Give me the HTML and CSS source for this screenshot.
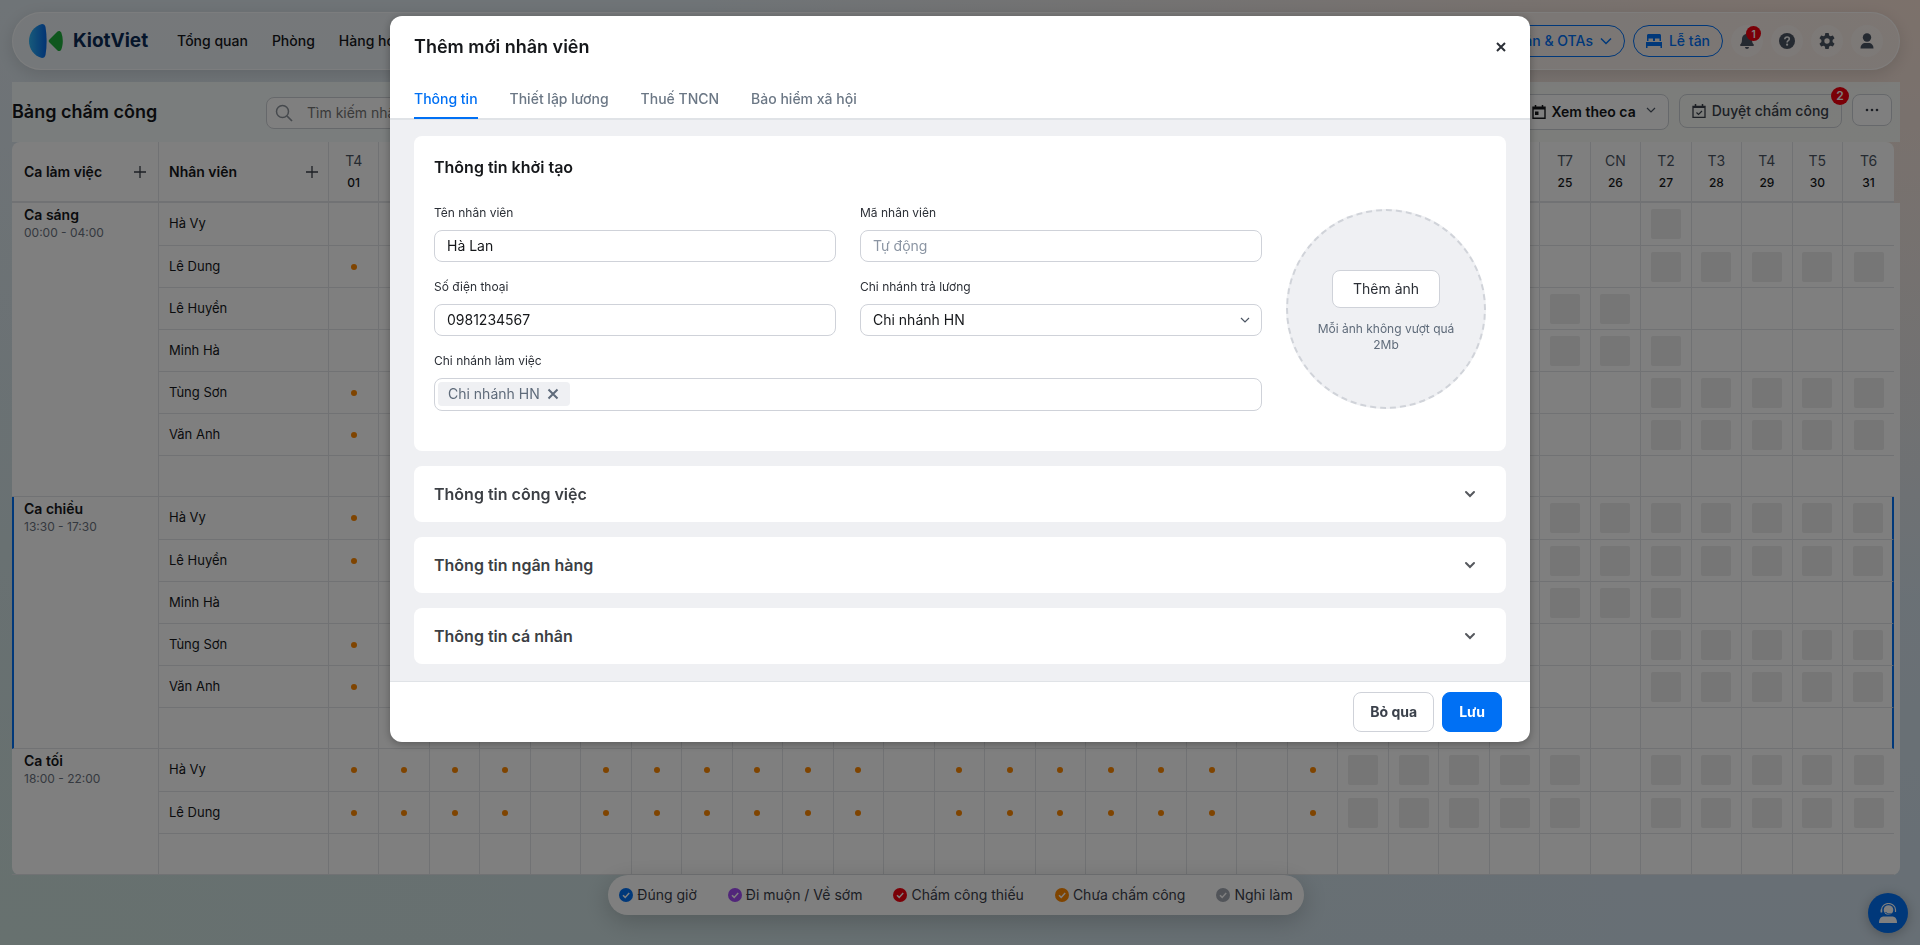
FILE: index.html
```html
<!DOCTYPE html>
<html lang="vi">
  <head>
    <meta charset="utf-8">
    <title>Bảng chấm công</title>
    <link rel="stylesheet" href="styles.css">
  </head>
  <body>
    <div class="page">
      <header class="topbar">
        <a class="brand" href="#">
          <svg class="brand-mark" width="34" height="34" viewBox="0 0 34 34">
            <defs>
              <linearGradient id="brandBlue" x1="0" x2="1">
                <stop offset="0" stop-color="#2fb4f5" />
                <stop offset="1" stop-color="#0567e8" />
              </linearGradient>
            </defs>
            <path d="M13 0C5 2 0 9 0 17s5 15 13 17c2 0 3-1 3.500-3 1.500-9 1.500-19 0-28C16 1 15 0 13 0z" fill="url(#brandBlue)" />
            <path d="M20.500 15.500l8-8c1-1 3-.8 3.800 1 2 5.500 2 11.500 0 17-.8 1.800-2.800 2-3.800 1l-8-8c-1.100-1-1.100-2 0-3z" fill="#1fae3c" />
          </svg>
          <span class="brand-name">KiotViet</span>
        </a>
        <nav class="nav">
          <a href="#">Tổng quan</a>
          <a href="#">Phòng</a>
          <a href="#">Hàng hóa</a>
        </nav>
        <div class="topbar-actions">
          <button class="pill">
            Kênh bán &amp; OTAs
            <svg width="12" height="12" viewBox="0 0 12 12"><path d="M1 3.500L6 8.500l5-5" fill="none" stroke="currentColor" stroke-width="1.500" /></svg>
          </button>
          <button class="pill">
            <svg width="16" height="16" viewBox="0 0 16 16"><path d="M1 8V2.500C1 1.700 1.600 1 2.500 1h11c.9 0 1.500.7 1.500 1.500V8H13.500V5.500H9V8H7V5.500H2.500V8zM0 9h16v6h-1.500v-2h-13v2H0z" fill="currentColor" /></svg>
            Lễ tân
          </button>
          <button class="round" aria-label="Thông báo">
            <svg width="16" height="16" viewBox="0 0 16 16"><path d="M8 0c.7 0 1.200.5 1.200 1.100C11.500 1.700 13 3.600 13 6c0 3.500.8 4.500 1.700 5.500.6.700.1 1.500-.7 1.500H2c-.8 0-1.300-.8-.7-1.500C2.200 10.500 3 9.500 3 6c0-2.400 1.500-4.300 3.800-4.900C6.800.5 7.300 0 8 0zM6 14h4c0 1.100-.9 2-2 2s-2-.9-2-2z" fill="currentColor" /></svg>
            <span class="badge badge-sm">1</span>
          </button>
          <button class="round" aria-label="Trợ giúp">
            <svg width="16" height="16" viewBox="0 0 16 16"><circle cx="8" cy="8" r="8" fill="currentColor" /><path d="M5.800 6.200c0-1.300 1-2.200 2.300-2.200s2.200.8 2.200 2c0 1.700-2.200 1.700-2.200 3.400" fill="none" stroke="#f4f4f4" stroke-width="1.600" /><circle cx="8.100" cy="11.700" r="1.100" fill="#f4f4f4" /></svg>
          </button>
          <button class="round" aria-label="Thiết lập">
            <svg width="16" height="16" viewBox="0 0 24 24"><path d="M9.500 0h5l.7 3.700 2 1.200 3.600-1.300 2.500 4.400-2.900 2.400v3.200l2.900 2.400-2.500 4.400-3.600-1.300-2 1.200-.7 3.700h-5l-.7-3.700-2-1.200-3.600 1.300L.7 16l2.900-2.400v-3.200L.7 8l2.500-4.400 3.600 1.300 2-1.200zM12 8a4 4 0 100 8 4 4 0 000-8z" fill="currentColor" fill-rule="evenodd" /></svg>
          </button>
          <button class="round" aria-label="Tài khoản">
            <svg width="16" height="16" viewBox="0 0 16 16"><circle cx="8" cy="4.500" r="4.200" fill="currentColor" /><path d="M1.500 15.500c0-3.600 2.200-5.500 5-5.500h3c2.800 0 5 1.900 5 5.500z" fill="currentColor" /></svg>
          </button>
        </div>
      </header>

      <div class="toolbar">
        <h1 class="page-title">Bảng chấm công</h1>
        <label class="search">
          <svg width="18" height="18" viewBox="0 0 18 18"><circle cx="7.500" cy="7.500" r="6" fill="none" stroke="currentColor" stroke-width="1.500" /><path d="M12 12l5 5" stroke="currentColor" stroke-width="1.700" /></svg>
          <input type="text" placeholder="Tìm kiếm nhân viên" aria-label="Tìm kiếm nhân viên">
        </label>
        <div class="toolbar-actions">
          <button class="tool tool-view">
            <svg width="14" height="14" viewBox="0 0 14 14"><path d="M3.500 0v3M10.500 0v3" stroke="currentColor" stroke-width="1.500" /><path d="M1 2.300h12v11H1z" fill="none" stroke="currentColor" stroke-width="1.400" /><path d="M1 2h12v2.500H1zM3 6.500h3.500V10H3z" fill="currentColor" /></svg>
            Xem theo ca
            <svg class="caret" width="10" height="10" viewBox="0 0 10 10"><path d="M1 3l4 4 4-4" fill="none" stroke="currentColor" stroke-width="1.200" /></svg>
          </button>
          <button class="tool tool-approve">
            <svg width="14" height="14" viewBox="0 0 14 14"><path d="M3.500 0v3M10.500 0v3" stroke="currentColor" stroke-width="1.500" /><path d="M1 2.300h12v11H1z" fill="none" stroke="currentColor" stroke-width="1.300" /><path d="M1 2h12v2H1z" fill="currentColor" /><path d="M4.500 8.500l2 2 3.500-3.500" fill="none" stroke="currentColor" stroke-width="1.200" /></svg>
            Duyệt chấm công
            <span class="badge badge-md">2</span>
          </button>
          <button class="tool tool-more" aria-label="Thêm">
            <svg width="14" height="4" viewBox="0 0 14 4"><circle cx="2" cy="2" r="1.300" fill="currentColor" /><circle cx="7" cy="2" r="1.300" fill="currentColor" /><circle cx="12" cy="2" r="1.300" fill="currentColor" /></svg>
          </button>
        </div>
      </div>

      <div class="grid-head">
        <table class="grid">
          <colgroup id="headCols">
            <col class="col-shift">
            <col class="col-staff">
          </colgroup>
          <thead>
            <tr id="headRow">
              <th>
                <div class="head-cell">
                  Ca làm việc
                  <button class="add" aria-label="Thêm ca làm việc"><svg width="12" height="12" viewBox="0 0 12 12"><path d="M6 0v12M0 6h12" stroke="currentColor" stroke-width="1.300" /></svg></button>
                </div>
              </th>
              <th>
                <div class="head-cell head-cell-staff">
                  Nhân viên
                  <button class="add" aria-label="Thêm nhân viên"><svg width="12" height="12" viewBox="0 0 12 12"><path d="M6 0v12M0 6h12" stroke="currentColor" stroke-width="1.300" /></svg></button>
                </div>
              </th>
            </tr>
          </thead>
        </table>
      </div>
      <div class="grid-body">
        <table class="grid" id="gridBody">
          <colgroup id="bodyCols">
            <col class="col-shift">
            <col class="col-staff">
          </colgroup>
        </table>
      </div>

      <ul class="legend">
        <li><svg class="on-time" width="14" height="14" viewBox="0 0 14 14"><circle cx="7" cy="7" r="7" fill="currentColor" /><path d="M4 7.200l2.200 2.200L10.200 5" fill="none" stroke="#fff" stroke-width="1.500" /></svg>Đúng giờ</li>
        <li><svg class="late" width="14" height="14" viewBox="0 0 14 14"><circle cx="7" cy="7" r="7" fill="currentColor" /><path d="M4 7.200l2.200 2.200L10.200 5" fill="none" stroke="#fff" stroke-width="1.500" /></svg>Đi muộn / Về sớm</li>
        <li><svg class="missing" width="14" height="14" viewBox="0 0 14 14"><circle cx="7" cy="7" r="7" fill="currentColor" /><path d="M4 7.200l2.200 2.200L10.200 5" fill="none" stroke="#fff" stroke-width="1.500" /></svg>Chấm công thiếu</li>
        <li><svg class="pending" width="14" height="14" viewBox="0 0 14 14"><circle cx="7" cy="7" r="7" fill="currentColor" /><path d="M4 7.200l2.200 2.200L10.200 5" fill="none" stroke="#fff" stroke-width="1.500" /></svg>Chưa chấm công</li>
        <li><svg class="off" width="14" height="14" viewBox="0 0 14 14"><circle cx="7" cy="7" r="7" fill="currentColor" /><path d="M4 7.200l2.200 2.200L10.200 5" fill="none" stroke="#fff" stroke-width="1.500" /></svg>Nghỉ làm</li>
      </ul>

      <button class="support" aria-label="Hỗ trợ">
        <svg width="20" height="20" viewBox="0 0 20 20"><circle cx="10.500" cy="7" r="4.800" fill="#fff" /><path d="M3.500 9V6.800a7 6.300 0 0114 0V9" fill="none" stroke="#fff" stroke-width="1.200" /><path d="M2.600 6.500h1.600v3H2.600z" fill="#fff" /><path d="M7.500 9c1 1.500 2.500 2 4.500 2 2.500 0 4-.5 5-2" fill="none" stroke="#0070f4" stroke-width="1" /><path d="M1 20c0-4.500 2-6.500 5-6.500h8c3 0 5 2 5 6.500z" fill="#fff" /></svg>
      </button>
    </div>

    <div class="overlay">
      <form class="modal" role="dialog" aria-labelledby="modalTitle">
        <div class="modal-header">
          <div class="modal-title-row">
            <h2 class="modal-title" id="modalTitle">Thêm mới nhân viên</h2>
            <button type="button" class="close" aria-label="Đóng">
              <svg width="10" height="10" viewBox="0 0 10 10"><path d="M1 1l8 8M9 1l-8 8" stroke="currentColor" stroke-width="2" /></svg>
            </button>
          </div>
          <div class="tabs" role="tablist">
            <button type="button" class="tab active" role="tab">Thông tin</button>
            <button type="button" class="tab" role="tab">Thiết lập lương</button>
            <button type="button" class="tab" role="tab">Thuế TNCN</button>
            <button type="button" class="tab" role="tab">Bảo hiểm xã hội</button>
          </div>
        </div>

        <div class="modal-body">
          <section class="card">
            <h3 class="card-title">Thông tin khởi tạo</h3>
            <div class="card-content">
              <div class="fields">
                <div class="field">
                  <label for="name">Tên nhân viên</label>
                  <input class="control" id="name" type="text" value="Hà Lan">
                </div>
                <div class="field">
                  <label for="code">Mã nhân viên</label>
                  <input class="control" id="code" type="text" placeholder="Tự động">
                </div>
                <div class="field">
                  <label for="phone">Số điện thoại</label>
                  <input class="control" id="phone" type="tel" value="0981234567">
                </div>
                <div class="field">
                  <label for="payBranch">Chi nhánh trả lương</label>
                  <div class="select-wrap">
                    <select class="control" id="payBranch">
                      <option>Chi nhánh HN</option>
                    </select>
                    <svg width="10" height="10" viewBox="0 0 10 10"><path d="M1 3l4 4 4-4" fill="none" stroke="currentColor" stroke-width="1.200" /></svg>
                  </div>
                </div>
                <div class="field field-wide">
                  <label for="workBranch">Chi nhánh làm việc</label>
                  <div class="control tag-box">
                    <span class="tag">
                      Chi nhánh HN
                      <button type="button" aria-label="Bỏ chọn Chi nhánh HN"><svg width="12" height="12" viewBox="0 0 12 12"><path d="M1.500 1.500l9 9M10.500 1.500l-9 9" stroke="currentColor" stroke-width="2" /></svg></button>
                    </span>
                    <input id="workBranch" type="text">
                  </div>
                </div>
              </div>
              <div class="avatar">
                <button type="button" class="avatar-btn">Thêm ảnh</button>
                <p class="avatar-hint">Mỗi ảnh không vượt quá 2Mb</p>
              </div>
            </div>
          </section>

          <button type="button" class="card card-collapsed">
            Thông tin công việc
            <svg width="12" height="12" viewBox="0 0 12 12"><path d="M2 4l4 4 4-4" fill="none" stroke="currentColor" stroke-width="2" stroke-linecap="round" /></svg>
          </button>
          <button type="button" class="card card-collapsed">
            Thông tin ngân hàng
            <svg width="12" height="12" viewBox="0 0 12 12"><path d="M2 4l4 4 4-4" fill="none" stroke="currentColor" stroke-width="2" stroke-linecap="round" /></svg>
          </button>
          <button type="button" class="card card-collapsed">
            Thông tin cá nhân
            <svg width="12" height="12" viewBox="0 0 12 12"><path d="M2 4l4 4 4-4" fill="none" stroke="currentColor" stroke-width="2" stroke-linecap="round" /></svg>
          </button>
        </div>

        <div class="modal-footer">
          <button type="button" class="btn">Bỏ qua</button>
          <button type="button" class="btn btn-primary">Lưu</button>
        </div>
      </form>
    </div>

    <script src="script.js"></script>
  </body>
</html>
```

FILE: styles.css
```css
* {
  box-sizing: border-box;
}

body {
  margin: 0;
  font-family: Inter, 'Liberation Sans', sans-serif;
  font-size: 14px;
  line-height: 20px;
  color: #15171a;
  overflow: hidden;
}

button,
input,
select {
  font: inherit;
  color: inherit;
}

button {
  cursor: pointer;
}

a {
  color: inherit;
  text-decoration: none;
}

svg {
  flex-shrink: 0;
}

h1,
h2,
h3,
p {
  margin: 0;
}

.page {
  display: flex;
  flex-direction: column;
  min-height: 100vh;
  padding: 12px 20px 0 12px;
  background:
    radial-gradient(ellipse at 100% 0, #f8e2d6 0%, rgba(248, 226, 214, 0) 45%),
    radial-gradient(ellipse at 0 100%, #cfe2de 0%, rgba(207, 226, 222, 0) 60%),
    linear-gradient(180deg, #dfe8ee, #cfdeea);
}

/* top bar */
.topbar {
  display: flex;
  align-items: center;
  height: 58px;
  padding: 0 16px;
  border: 1px solid rgba(255, 255, 255, 0.7);
  border-radius: 29px;
  background: rgba(255, 255, 255, 0.4);
  box-shadow: 0 4px 16px rgba(0, 0, 0, 0.12);
}

.brand {
  display: flex;
  align-items: center;
  gap: 10px;
}

.brand-name {
  font-size: 19px;
  font-weight: 700;
  color: #0a2a55;
}

.nav {
  display: flex;
  gap: 24px;
  margin-left: 29px;
  font-weight: 500;
}

.topbar-actions {
  display: flex;
  align-items: center;
  gap: 8px;
  margin-left: auto;
}

.pill {
  display: flex;
  align-items: center;
  gap: 7px;
  height: 32px;
  padding: 0 12px;
  border: 1px solid #0070f4;
  border-radius: 16px;
  background: none;
  color: #0070f4;
  font-weight: 500;
}

.round {
  position: relative;
  display: flex;
  align-items: center;
  justify-content: center;
  width: 32px;
  height: 32px;
  padding: 0;
  border: 0;
  border-radius: 50%;
  background: rgba(255, 255, 255, 0.35);
  color: #4b5563;
}

.badge {
  position: absolute;
  display: flex;
  align-items: center;
  justify-content: center;
  border-radius: 50%;
  background: #f5000f;
  color: #fff;
  font-weight: 600;
}

.badge-sm {
  top: 1px;
  right: 2px;
  width: 15px;
  height: 15px;
  font-size: 10px;
}

.badge-md {
  top: -8px;
  right: -8px;
  width: 18px;
  height: 18px;
  font-size: 12px;
}

/* toolbar */
.toolbar {
  display: flex;
  align-items: flex-start;
  height: 60px;
  margin-top: 12px;
  padding: 12px 8px 0 0;
  background: rgba(250, 255, 252, 0.8);
}

.page-title {
  width: 254px;
  font-size: 18px;
  line-height: 36px;
  font-weight: 600;
}

.search {
  display: flex;
  align-items: center;
  gap: 12px;
  width: 400px;
  height: 32px;
  margin-top: 3px;
  padding: 0 8px;
  border: 1px solid #cdd1d6;
  border-radius: 8px;
  background: #fff;
  color: #8c939b;
}

.search input {
  flex: 1;
  border: 0;
  outline: 0;
  background: none;
}

.toolbar-actions {
  display: flex;
  align-items: flex-start;
  gap: 10px;
  margin-left: auto;
}

.tool {
  position: relative;
  display: flex;
  align-items: center;
  gap: 6px;
  height: 34px;
  padding: 0 12px;
  border: 1px solid #cdd1d6;
  border-radius: 8px;
  background: none;
  font-weight: 500;
}

.tool-view {
  gap: 5px;
  height: 36px;
  background: #fff;
  font-weight: 600;
}

.caret {
  margin: 0 0 4px 5px;
  color: #4b5563;
}

.tool-approve {
  color: #3a404a;
}

.tool-more {
  justify-content: center;
  width: 40px;
  height: 32px;
  padding: 0;
  background: #fff;
  color: #3a404a;
}

/* timesheet grid */
.grid-head {
  padding-right: 6px;
}

.grid-body {
  padding-right: 6px;
  border-radius: 0 0 8px 8px;
  background: #fff;
}

.grid {
  width: 100%;
  table-layout: fixed;
  border-collapse: separate;
  border-spacing: 0;
}

.grid-head .grid {
  border-radius: 8px 8px 0 0;
  background: #fff;
}

.col-shift {
  width: 147px;
}

.col-staff {
  width: 170px;
}

.grid th {
  height: 61px;
  padding: 0;
  border-right: 1px solid #e3e5e8;
  border-bottom: 2px solid #e3e5e8;
  font-weight: 600;
  text-align: center;
}

.grid th:last-child,
.grid td:last-child {
  border-right: 0;
}

.head-cell {
  display: flex;
  align-items: center;
  justify-content: space-between;
  padding: 0 12px;
}

.head-cell-staff {
  padding: 0 10px;
}

.add {
  display: flex;
  padding: 0;
  border: 0;
  background: none;
  color: #3a404a;
}

.weekday {
  display: block;
  line-height: 24px;
  font-weight: 400;
  color: #4b5563;
}

.day {
  display: block;
  padding-bottom: 2px;
  font-size: 12px;
  font-weight: 500;
}

.grid td {
  height: 42px;
  padding: 0;
  border-right: 1px solid #e3e5e8;
  border-bottom: 1px solid #e3e5e8;
  text-align: center;
}

.grid .row-first td {
  height: 43px;
}

.grid .row-last td {
  height: 41px;
}

.grid td.shift {
  padding: 2px 12px;
  text-align: left;
  vertical-align: top;
}

.grid td.staff {
  padding: 0 0 2px 10px;
  font-size: 13px;
  text-align: left;
}

.shift-name {
  display: block;
  font-weight: 600;
}

.shift-time {
  display: block;
  font-size: 12px;
  line-height: 16px;
  color: #6b7280;
}

.current td.shift {
  padding-left: 10px;
  border-left: 2px solid #0070f4;
}

.current td:last-child {
  border-right: 2px solid #0070f4;
}

.dot {
  display: block;
  width: 6px;
  height: 6px;
  margin: 0 auto;
  border-radius: 50%;
  background: #ff8800;
}

.slot {
  display: block;
  width: 30px;
  height: 30px;
  margin: 0 auto;
  border-radius: 2px;
  background: #ededed;
}

/* legend */
.legend {
  display: flex;
  align-items: center;
  align-self: center;
  gap: 31px;
  height: 40px;
  margin: 0;
  padding: 0 11px;
  border-radius: 20px;
  background: #fff;
  box-shadow: 0 6px 24px rgba(0, 0, 0, 0.2);
  color: #3a404a;
  list-style: none;
}

.legend li {
  display: flex;
  align-items: center;
  gap: 4px;
}

.on-time {
  color: #0070f4;
}

.late {
  color: #a34cf5;
}

.missing {
  color: #f5000f;
}

.pending {
  color: #ff8800;
}

.off {
  color: #a3a9b3;
}

.support {
  position: fixed;
  right: 12px;
  bottom: 12px;
  display: flex;
  align-items: center;
  justify-content: center;
  width: 40px;
  height: 40px;
  padding: 0;
  border: 0;
  border-radius: 50%;
  background: #0070f4;
  box-shadow: 0 2px 12px rgba(0, 0, 0, 0.25);
}

/* modal */
.overlay {
  position: fixed;
  inset: 0;
  display: flex;
  align-items: flex-start;
  justify-content: center;
  padding: 16px;
  background: rgba(0, 0, 0, 0.5);
}

.modal {
  width: 100%;
  max-width: 1140px;
  border-radius: 12px;
  background: #fff;
  box-shadow: 0 2px 8px rgba(0, 0, 0, 0.3);
  overflow: hidden;
}

.modal-header {
  padding: 19px 24px 0;
  border-bottom: 2px solid #e0e3e7;
}

.modal-title-row {
  display: flex;
  align-items: center;
  justify-content: space-between;
}

.modal-title {
  font-size: 18px;
  line-height: 24px;
  font-weight: 600;
}

.close {
  display: flex;
  padding: 0;
  border: 0;
  background: none;
  color: #2b2f36;
}

.tabs {
  display: flex;
  gap: 32px;
  margin-top: 30px;
}

.tab {
  margin-bottom: -1px;
  padding: 0 0 8px;
  border: 0;
  border-bottom: 2px solid transparent;
  background: none;
  color: #6b7785;
  font-weight: 500;
}

.tab.active {
  border-color: #0070f4;
  color: #0070f4;
}

.modal-body {
  display: flex;
  flex-direction: column;
  gap: 15px;
  padding: 16px 24px 17px;
  background: #eff0f3;
}

.card {
  padding: 20px 20px 40px;
  border-radius: 8px;
  background: #fff;
}

.card-title {
  margin-bottom: 26px;
  font-size: 16px;
  line-height: 22px;
  font-weight: 600;
}

.card-content {
  display: flex;
  align-items: flex-start;
  gap: 24px;
}

.fields {
  flex: 1;
  display: grid;
  grid-template-columns: 1fr 1fr;
  gap: 16px 24px;
}

.field label {
  display: block;
  margin-bottom: 8px;
  font-size: 12px;
  line-height: 18px;
  color: #2b2f36;
}

.field-wide {
  grid-column: 1 / -1;
}

.control {
  display: block;
  width: 100%;
  height: 32px;
  padding: 0 12px;
  border: 1px solid #cfd2d9;
  border-radius: 8px;
  background: #fff;
  outline: 0;
}

input.control {
  padding-bottom: 2px;
}

.control::placeholder {
  color: #8b95a3;
}

.select-wrap {
  position: relative;
}

.select-wrap select {
  appearance: none;
}

.select-wrap svg {
  position: absolute;
  top: 11px;
  right: 12px;
  color: #4b5563;
  pointer-events: none;
}

.tag-box {
  display: flex;
  align-items: flex-start;
  height: 33px;
  padding: 3px;
}

.tag-box input {
  flex: 1;
  border: 0;
  outline: 0;
}

.tag {
  display: flex;
  align-items: center;
  gap: 7px;
  height: 24px;
  padding: 0 11px 0 10px;
  border-radius: 4px;
  background: #eff0f3;
  color: #5f6b7a;
}

.tag button {
  display: flex;
  padding: 0;
  border: 0;
  background: none;
}

.avatar {
  display: flex;
  flex-direction: column;
  align-items: center;
  width: 200px;
  height: 200px;
  margin-top: 5px;
  padding: 59px 28px 0;
  border: 2px dashed #d0d3d9;
  border-radius: 50%;
  background: #eff0f3;
}

.avatar-btn {
  height: 38px;
  padding: 0 20px;
  border: 1px solid #cfd2d9;
  border-radius: 8px;
  background: #fff;
  color: #2b2f36;
}

.avatar-hint {
  margin-top: 13px;
  font-size: 12px;
  line-height: 16px;
  color: #5f6b7a;
  text-align: center;
}

.card-collapsed {
  display: flex;
  align-items: center;
  justify-content: space-between;
  height: 56px;
  padding: 0 30px 0 20px;
  border: 0;
  color: #3c3f44;
  font-size: 16px;
  font-weight: 600;
}

.card-collapsed svg {
  color: #55585d;
}

.modal-footer {
  display: flex;
  justify-content: flex-end;
  gap: 8px;
  padding: 10px 28px;
  border-top: 1px solid #e0e3e7;
}

.btn {
  height: 40px;
  padding: 0 16px;
  border: 1px solid #cfd2d9;
  border-radius: 8px;
  background: #fff;
  color: #3a404a;
  font-weight: 700;
}

.btn-primary {
  border-color: #0070f4;
  background: #0070f4;
  color: #fff;
}
```

FILE: script.js
```js
const DAYS = 31;
const WEEKDAYS = ['T4', 'T5', 'T6', 'T7', 'CN', 'T2', 'T3'];

// dots: days not clocked yet, slots: upcoming scheduled days
const WORKED = [1, 2, 3, 4, 6, 7, 8, 9, 10, 11, 13, 14, 15, 16, 17, 18, 20];
const LAST_WEEK = [27, 28, 29, 30, 31];

const shifts = [
  {
    name: 'Ca sáng',
    time: '00:00 - 04:00',
    staff: [
      { name: 'Hà Vy', dots: [], slots: [27] },
      { name: 'Lê Dung', dots: [1], slots: LAST_WEEK },
      { name: 'Lê Huyền', dots: [], slots: [25, 26] },
      { name: 'Minh Hà', dots: [], slots: [25, 26, 27] },
      { name: 'Tùng Sơn', dots: [1], slots: LAST_WEEK },
      { name: 'Văn Anh', dots: [1], slots: LAST_WEEK },
    ],
  },
  {
    name: 'Ca chiều',
    time: '13:30 - 17:30',
    current: true,
    staff: [
      { name: 'Hà Vy', dots: [1], slots: [25, 26, ...LAST_WEEK] },
      { name: 'Lê Huyền', dots: [1], slots: [25, 26, ...LAST_WEEK] },
      { name: 'Minh Hà', dots: [], slots: [25, 26, 27] },
      { name: 'Tùng Sơn', dots: [1], slots: LAST_WEEK },
      { name: 'Văn Anh', dots: [1], slots: LAST_WEEK },
    ],
  },
  {
    name: 'Ca tối',
    time: '18:00 - 22:00',
    staff: [
      { name: 'Hà Vy', dots: WORKED, slots: [21, 22, 23, 24, 25, ...LAST_WEEK] },
      { name: 'Lê Dung', dots: WORKED, slots: [21, 22, 23, 24, 25, ...LAST_WEEK] },
    ],
  },
];

let cols = '';
let head = '';
for (let d = 1; d <= DAYS; d++) {
  cols += '<col>';
  head += `<th><span class="weekday">${WEEKDAYS[(d - 1) % 7]}</span><span class="day">${String(d).padStart(2, '0')}</span></th>`;
}
document.getElementById('headCols').insertAdjacentHTML('beforeend', cols);
document.getElementById('bodyCols').insertAdjacentHTML('beforeend', cols);
document.getElementById('headRow').insertAdjacentHTML('beforeend', head);

let body = '';
shifts.forEach((shift) => {
  // every shift ends with an empty row
  const rows = [...shift.staff, { name: '', dots: [], slots: [] }];
  body += `<tbody class="${shift.current ? 'current' : ''}">`;
  rows.forEach((row, i) => {
    const cls = i === 0 ? 'row-first' : i === rows.length - 1 ? 'row-last' : '';
    body += `<tr class="${cls}">`;
    if (i === 0) {
      body += `<td class="shift" rowspan="${rows.length}"><span class="shift-name">${shift.name}</span><span class="shift-time">${shift.time}</span></td>`;
    }
    body += `<td class="staff">${row.name}</td>`;
    for (let d = 1; d <= DAYS; d++) {
      let mark = '';
      if (row.dots.includes(d)) mark = '<span class="dot"></span>';
      if (row.slots.includes(d)) mark = '<span class="slot"></span>';
      body += `<td>${mark}</td>`;
    }
    body += '</tr>';
  });
  body += '</tbody>';
});
document.getElementById('gridBody').insertAdjacentHTML('beforeend', body);
```
